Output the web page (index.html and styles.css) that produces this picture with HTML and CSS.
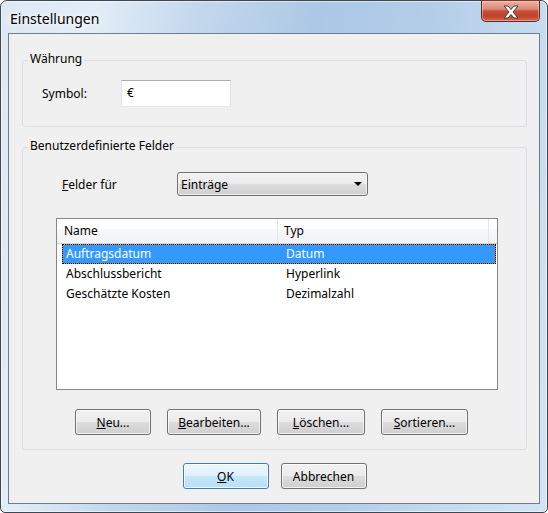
FILE: index.html
```html
<!DOCTYPE html>
<html lang="de">
<head>
<meta charset="utf-8">
<title>Einstellungen</title>
<link rel="stylesheet" href="styles.css">
</head>
<body>
<div class="window">
  <div class="titlebar">
    <span class="title">Einstellungen</span>
    <button class="close" aria-label="Schließen">
      <svg width="16" height="14" viewBox="0 0 16 14"><polygon points="1,1 5,1 8,4.5 11,1 15,1 10,7 15,13 11,13 8,9.5 5,13 1,13 6,7" fill="#fff" stroke="#3a3a3a" stroke-width="1" stroke-linejoin="round"/></svg>
    </button>
  </div>
  <div class="client">
    <fieldset class="group group-currency">
      <legend>Währung</legend>
      <div class="symbol-row">
        <span class="label">Symbol:</span>
        <div class="textbox">€</div>
      </div>
    </fieldset>
    <fieldset class="group group-fields">
      <legend>Benutzerdefinierte Felder</legend>
      <div class="fields-for">
        <span class="label"><u>F</u>elder für</span>
        <div class="combo"><span>Einträge</span><span class="arrow"></span></div>
      </div>
      <div class="listview">
        <div class="lv-header">
          <div class="col col-name">Name</div>
          <div class="col col-type">Typ</div>
          <div class="col col-fill"></div>
        </div>
        <div class="lv-row selected"><span>Auftragsdatum</span><span>Datum</span></div>
        <div class="lv-row"><span>Abschlussbericht</span><span>Hyperlink</span></div>
        <div class="lv-row"><span>Geschätzte Kosten</span><span>Dezimalzahl</span></div>
      </div>
      <div class="btn-row">
        <button class="btn w-neu"><u>N</u>eu...</button>
        <button class="btn w-bearb"><u>B</u>earbeiten...</button>
        <button class="btn w-losch"><u>L</u>öschen...</button>
        <button class="btn w-sort"><u>S</u>ortieren...</button>
      </div>
    </fieldset>
    <div class="dialog-buttons">
      <button class="btn btn-default w-dlg"><u>O</u>K</button>
      <button class="btn w-dlg">Abbrechen</button>
    </div>
  </div>
</div>
</body>
</html>
```
FILE: styles.css
```css
* { box-sizing: border-box; }
html, body { margin: 0; background: #fff; }
body {
  font-family: "Noto Sans", "DejaVu Sans", sans-serif;
  font-size: 12px;
  color: #000;
}
.window {
  width: 548px;
  height: 513px;
  border: 1px solid #3d4753;
  border-radius: 7px 7px 5px 5px;
  background: linear-gradient(100deg, #dde8f4 0%, #e3edf7 15%, #c2d7ec 32%, #adc8e5 50%, #b3cde8 68%, #c6dbef 85%, #d4e4f4 100%);
  box-shadow: inset 0 0 0 1px rgba(255,255,255,0.55);
  padding: 0 7px 8px 7px;
  display: flex;
  flex-direction: column;
}
.titlebar {
  height: 32px;
  display: flex;
  align-items: flex-start;
  justify-content: space-between;
}
.title {
  margin: 8px 0 0 2px;
  font-size: 14px;
  line-height: 20px;
  text-shadow: 0 0 6px #fff, 0 0 10px #fff, 0 0 14px rgba(255,255,255,0.8);
}
.close {
  width: 59px;
  height: 22px;
  margin-top: -1px;
  padding: 0;
  border: 1px solid #5b2b24;
  border-top-color: #7a3a30;
  border-radius: 0 0 5px 5px;
  background: linear-gradient(#ecb0a4 0%, #dc8a79 40%, #c8503a 50%, #c1402a 75%, #d06a50 100%);
  box-shadow: inset 0 0 0 1px rgba(255,220,210,0.45);
  display: flex;
  align-items: center;
  justify-content: center;
}
.close svg { display: block; margin-top: 1px; }
.client {
  flex: 1;
  border: 1px solid #6d7d8e;
  background: #f0f0f0;
  padding: 18px 12px 0 13px;
  display: flex;
  flex-direction: column;
}
.group {
  margin: 0;
  padding: 0;
  min-width: 0;
  border: 1px solid #d5dfe5;
  border-radius: 3px;
}
.group legend {
  margin-left: 5px;
  padding: 0 2px 2px;
  line-height: 14px;
}
.symbol-row {
  display: grid;
  grid-template-columns: 79px 110px;
  align-items: center;
  padding: 12px 0 19px 19px;
}
.textbox {
  height: 27px;
  background: #fff;
  border: 1px solid #e3e9ef;
  border-top-color: #abadb3;
  border-left-color: #e2e3ea;
  border-right-color: #dbdfe6;
  padding-left: 5px;
  line-height: 24px;
}
.group-fields { margin-top: 12px; }
.fields-for {
  display: grid;
  grid-template-columns: 115px 191px;
  align-items: center;
  padding: 17px 0 0 39px;
}
.combo {
  height: 24px;
  border: 1px solid #707070;
  border-radius: 3px;
  background: linear-gradient(#f2f2f2 0%, #ebebeb 50%, #dddddd 50%, #cfcfcf 100%);
  box-shadow: inset 0 0 0 1px rgba(255,255,255,0.6);
  display: flex;
  align-items: center;
  justify-content: space-between;
  padding: 0 5px 0 3px;
}
.arrow {
  width: 0;
  height: 0;
  border-left: 4px solid transparent;
  border-right: 4px solid transparent;
  border-top: 4px solid #000;
}
.listview {
  margin: 22px 0 0 33px;
  width: 442px;
  height: 172px;
  border: 1px solid #828790;
  background: #fff;
}
.lv-header {
  height: 25px;
  display: flex;
  background: linear-gradient(#ffffff 0%, #ffffff 40%, #f7f8fa 40%, #f1f2f4 100%);
  border-bottom: 1px solid #d5d5d5;
}
.col {
  line-height: 24px;
  border-right: 1px solid #e3e4e6;
}
.col-name { width: 221px; padding-left: 7px; }
.col-type { width: 211px; padding-left: 6px; }
.col-fill { flex: 1; border-right: 0; }
.lv-row {
  height: 20px;
  margin: 0 1px 0 5px;
  display: grid;
  grid-template-columns: 216px 1fr;
  align-items: center;
  line-height: 18px;
}
.lv-row span:first-child { padding-left: 4px; }
.lv-row span:last-child { padding-left: 8px; }
.lv-row.selected {
  background: #3399ff;
  color: #fff;
  border: 1px solid #e8902c;
  outline: 1px dotted #000;
  outline-offset: -1px;
  grid-template-columns: 215px 1fr;
}
.lv-row.selected span:first-child { padding-left: 3px; }
.btn-row {
  display: flex;
  gap: 16px;
  margin-top: 19px;
  padding: 0 0 14px 52px;
}
.btn {
  height: 26px;
  padding: 0;
  font: inherit;
  color: #000;
  border: 1px solid #707070;
  border-radius: 3px;
  background: linear-gradient(#f2f2f2 0%, #ebebeb 50%, #dddddd 50%, #cfcfcf 100%);
  box-shadow: inset 0 0 0 1px rgba(255,255,255,0.7);
}
.w-neu { width: 76px; }
.w-bearb { width: 94px; }
.w-losch { width: 88px; }
.w-sort { width: 87px; }
.w-dlg { width: 86px; }
.btn-default {
  border-color: #3c7fb1;
  background: linear-gradient(#ebf6fd 0%, #dff1fc 50%, #c6e8fb 50%, #b6dff6 100%);
  box-shadow: inset 0 0 0 1px rgba(255,255,255,0.8);
}
.dialog-buttons {
  display: flex;
  justify-content: center;
  gap: 12px;
  margin-top: 13px;
}
```
